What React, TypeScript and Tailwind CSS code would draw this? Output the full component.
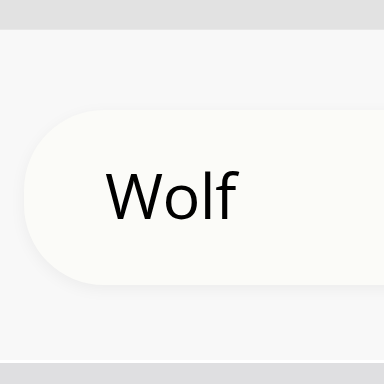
export default function App() {
  return (
    <div className="w-[384px] h-[384px] overflow-hidden flex flex-col bg-[#f8f8f8]" style={{ fontFamily: '"Open Sans", "Noto Sans", sans-serif' }}>
      <div className="h-[30px] shrink-0 bg-[#e2e2e2] border-b border-[#e8e8e8]" />
      <div className="flex-1 flex flex-col pt-[80px] pl-[24px] bg-[#f8f8f8]">
        <div className="w-[420px] h-[175px] shrink-0 rounded-l-[80px] bg-[#fbfbf8] shadow-[0_4px_16px_rgba(0,0,0,0.05)] flex items-center pl-[81px]">
          <span className="text-[63px] leading-none text-black tracking-[-0.6px] mb-[7px]">Wolf</span>
        </div>
      </div>
      <div className="h-[3px] shrink-0 bg-white" />
      <div className="h-[21px] shrink-0 bg-[#dfdfe1]" />
    </div>
  );
}
